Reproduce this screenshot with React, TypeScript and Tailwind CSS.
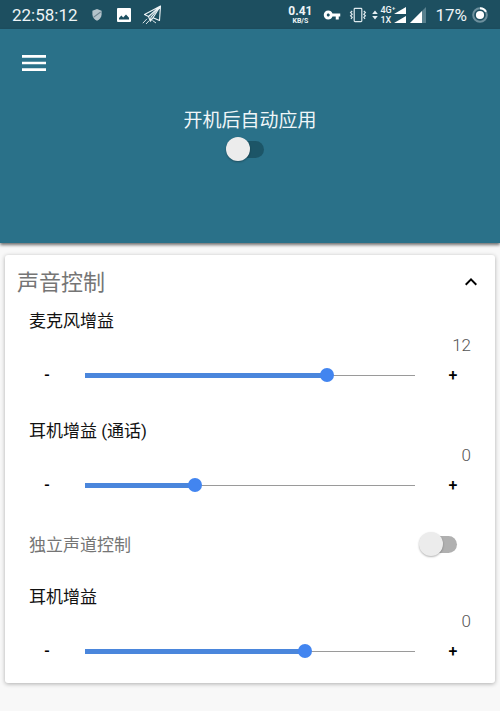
import React, { useState } from 'react';
import { MdKeyboardArrowDown, MdKeyboardArrowUp, MdMenu, MdVpnKey } from 'react-icons/md';

interface SwitchProps {
  id: string;
  checked: boolean;
  onChange: (checked: boolean) => void;
  trackClass: string;
}

const Switch: React.FC<SwitchProps> = ({ id, checked, onChange, trackClass }) => (
  <span className="grid h-6 w-[38px] items-center">
    <span className={`[grid-area:1/1] ml-1 h-[17px] rounded-full ${trackClass}`} />
    <input
      id={id}
      type="checkbox"
      role="switch"
      checked={checked}
      onChange={(e) => onChange(e.target.checked)}
      className={`[grid-area:1/1] size-6 cursor-pointer appearance-none rounded-full bg-[#ececec] shadow-[0_1px_2px_rgba(0,0,0,0.3)] ${
        checked ? 'justify-self-end' : 'justify-self-start'
      }`}
    />
  </span>
);

interface GainSliderProps {
  id: string;
  label: string;
  min: number;
  max: number;
  initial: number;
}

const GainSlider: React.FC<GainSliderProps> = ({ id, label, min, max, initial }) => {
  const [value, setValue] = useState(initial);
  const percent = ((value - min) / (max - min)) * 100;

  const step = (delta: number) => {
    setValue(Math.min(max, Math.max(min, value + delta)));
  };

  return (
    <div className="px-6">
      <label htmlFor={id} className="block text-[17px] leading-[26px] text-[#111]">
        {label}
      </label>
      <output htmlFor={id} className="block text-right text-[17px] font-light leading-[22px] text-[#555]">
        {value}
      </output>
      <div className="flex h-[38px] items-center gap-5">
        <button type="button" aria-label={`${label} -`} onClick={() => step(-1)} className="w-9 text-base font-medium text-black">
          -
        </button>
        <div className="grid flex-1 items-center">
          <span className="[grid-area:1/1] h-px bg-[#9a9a9a]" />
          <span className="[grid-area:1/1] h-[5px] bg-[#4a86dc]" style={{ width: `${percent}%` }} />
          {/* Half a thumb of overhang on each side keeps the thumb on the end of the fill */}
          <input
            id={id}
            type="range"
            min={min}
            max={max}
            value={value}
            onChange={(e) => setValue(Number(e.target.value))}
            className="[grid-area:1/1] -mx-[7px] h-6 cursor-pointer appearance-none bg-transparent [&::-webkit-slider-thumb]:size-[14px] [&::-webkit-slider-thumb]:appearance-none [&::-webkit-slider-thumb]:rounded-full [&::-webkit-slider-thumb]:bg-[#4285f0]"
          />
        </div>
        <button type="button" aria-label={`${label} +`} onClick={() => step(1)} className="w-9 pt-0.5 text-base font-medium text-black">
          +
        </button>
      </div>
    </div>
  );
};

const ShieldIcon = () => (
  <svg viewBox="0 0 10 12" className="h-3 w-[10px]">
    <path d="M5 0 9.6 1.7V5.5C9.6 8.4 7.6 10.8 5 11.8 2.4 10.8.4 8.4.4 5.5V1.7Z" fill="#b4c3cb" />
    <path d="M1.4 8.4 8.6 3" stroke="#6f8591" strokeWidth="1.1" />
  </svg>
);

const PictureIcon = () => (
  <svg viewBox="0 0 14 14" className="size-[14px]">
    <rect width="14" height="14" rx="1" fill="#fff" />
    <path d="M2 11.4V10L4.4 7.6 6.2 9.4 9 6.6 12 9.8V11.4Z" fill="#1d4f60" />
  </svg>
);

const PaperPlaneIcon = () => (
  <svg viewBox="0 0 20 20" className="size-5" fill="none" stroke="#f0f6f8" strokeWidth="1.1" strokeLinejoin="round">
    <path d="M18.5 1 2.5 9.5 6.5 11.5 18.5 1 17.5 15.5 11 12.8 18.5 1" />
    <path d="M6.5 11.5 8.4 16.2 11 12.8M8.4 16.2l.6-4L18.5 1" />
    <path d="M.8 18.2 5 13.8M4 19l3.2-3.4M10.5 15.5l3.5 2.5" strokeWidth="0.9" />
  </svg>
);

const VibrateIcon = () => (
  <svg viewBox="0 0 18 16" className="h-4 w-[18px]" fill="none" stroke="#dfeaee" strokeWidth="1.2">
    <rect x="5.2" y="1.4" width="7.6" height="13.2" rx="0.8" />
    <path d="M3.2 4 1.6 5.6 3.2 7.2 1.6 8.8 3.2 10.4 2 12M14.8 4l1.6 1.6-1.6 1.6 1.6 1.6-1.6 1.6L16 12" />
  </svg>
);

const StatusBar = () => (
  <div className="flex h-[29px] items-center justify-between bg-[#1d4f60] px-3 text-[17px] leading-5 text-[#eef4f6]">
    <div className="flex items-center">
      <span>22:58:12</span>
      <span className="ml-[14px]">
        <ShieldIcon />
      </span>
      <span className="ml-[15px]">
        <PictureIcon />
      </span>
      <span className="ml-[11px]">
        <PaperPlaneIcon />
      </span>
    </div>
    <div className="flex items-center">
      <div className="text-center font-bold">
        <div className="text-[12px] leading-[12px]">0.41</div>
        <div className="text-[7px] leading-[8px]">KB/S</div>
      </div>
      <MdVpnKey className="ml-[11px] size-[18px] text-white" />
      <span className="ml-[8px]">
        <VibrateIcon />
      </span>
      <svg viewBox="0 0 6 10" className="ml-[5px] h-[10px] w-[6px]" fill="#e6eff2">
        <path d="M3 .4 5.8 4H.2ZM3 9.6.2 6h5.6Z" />
      </svg>
      <div className="ml-[2px] w-[14px] text-[9px] font-medium leading-[10px]">
        <div>4G⁺</div>
        <div>1X</div>
      </div>
      <svg viewBox="0 0 12 18" className="h-[18px] w-3" fill="#fff">
        <path d="M12 1v7H0ZM12 10v7H0Z" />
      </svg>
      <svg viewBox="0 0 16 16" className="ml-[4px] size-4">
        <path d="M16 0V16H0Z" fill="#58808e" />
        <path d="M12 4V16H0Z" fill="#fff" />
      </svg>
      <span className="ml-[9px]">17%</span>
      <svg viewBox="0 0 16 16" className="ml-[5px] size-4" fill="none">
        <circle cx="8" cy="8" r="6.8" stroke="#6d909d" strokeWidth="2" />
        <path d="M8 1.2A6.8 6.8 0 0 1 14 4.8" stroke="#fff" strokeWidth="2" />
        <circle cx="8" cy="8" r="4.1" fill="#fff" />
      </svg>
    </div>
  </div>
);

const App: React.FC = () => {
  const [applyOnBoot, setApplyOnBoot] = useState(false);
  const [separateChannels, setSeparateChannels] = useState(false);
  const [expanded, setExpanded] = useState(true);

  return (
    <div className="min-h-screen bg-[#f8f8f8] font-[Roboto,'Noto_Sans_CJK_SC',sans-serif]">
      <StatusBar />

      <header className="bg-[#2a7189] px-[18px] pb-[82px] pt-[18px] shadow-[0_2px_3px_rgba(0,0,0,0.55)]">
        <button type="button" aria-label="菜单" className="block text-white">
          <MdMenu className="size-8" />
        </button>
        <div className="mt-7 flex flex-col items-center gap-0.5">
          <label htmlFor="apply-on-boot" className="text-[19px] leading-7 text-[#f0f6f8]">
            开机后自动应用
          </label>
          <span className="pr-[10px]">
            <Switch
              id="apply-on-boot"
              checked={applyOnBoot}
              onChange={setApplyOnBoot}
              trackClass="bg-[#1c5567]"
            />
          </span>
        </div>
      </header>

      <main className="px-[5px] pb-7 pt-3">
        <section className="rounded-[3px] bg-white pb-[13px] shadow-[0_1px_4px_rgba(0,0,0,0.3)]">
          <div className="flex h-[53px] items-center justify-between px-3">
            <h2 className="pt-0.5 text-[22px] leading-8 text-[#757575]">声音控制</h2>
            <button
              type="button"
              aria-label="声音控制"
              aria-expanded={expanded}
              onClick={() => setExpanded(!expanded)}
              className="text-black"
            >
              {expanded ? <MdKeyboardArrowUp className="size-6" /> : <MdKeyboardArrowDown className="size-6" />}
            </button>
          </div>

          {expanded && (
            <div>
              <GainSlider id="mic-gain" label="麦克风增益" min={-10} max={20} initial={12} />
              <div className="mt-6">
                <GainSlider id="earpiece-gain" label="耳机增益 (通话)" min={-10} max={20} initial={0} />
              </div>
              <div className="my-4 flex h-12 items-center justify-between pl-6 pr-[38px]">
                <label htmlFor="separate-channels" className="pt-0.5 text-[17px] leading-[26px] text-[#757575]">
                  独立声道控制
                </label>
                <Switch
                  id="separate-channels"
                  checked={separateChannels}
                  onChange={setSeparateChannels}
                  trackClass="bg-[#b0b0b0]"
                />
              </div>
              <GainSlider id="headphone-gain" label="耳机增益" min={-40} max={20} initial={0} />
            </div>
          )}
        </section>
      </main>
    </div>
  );
};

export default App;
